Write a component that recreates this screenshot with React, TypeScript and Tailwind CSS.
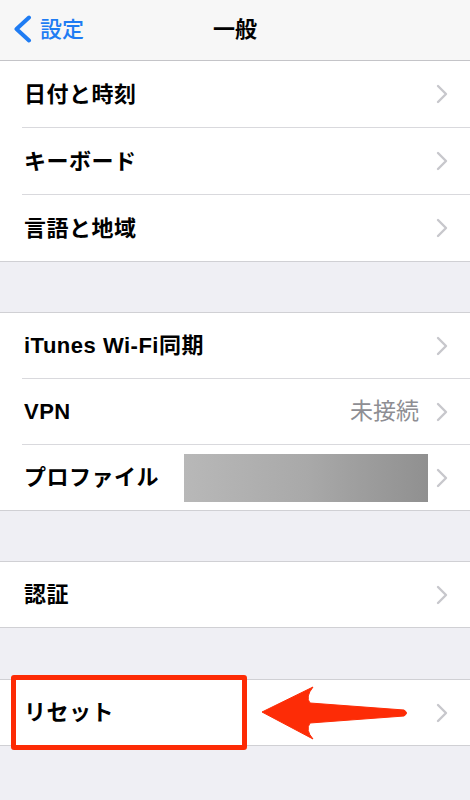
import React from 'react';

const font = { fontFamily: '"Liberation Sans", "Noto Sans CJK JP", sans-serif' };

const Chevron: React.FC = () => (
  <svg width="14" height="20" viewBox="0 0 14 20" className="shrink-0">
    <path d="M3 2 L11 10 L3 18" fill="none" stroke="#c7c7cc" strokeWidth="2.4" strokeLinecap="round" strokeLinejoin="round" />
  </svg>
);

interface RowProps {
  label: string;
  value?: string;
  redacted?: boolean;
  tall?: boolean;
}

const Row: React.FC<RowProps> = ({ label, value, redacted, tall }) => (
  <div className={`flex items-center pl-6 pr-[21px] ${tall ? 'h-[66px]' : 'h-[65px]'}`}>
    <span className="text-[22px] font-semibold text-black tracking-[0.5px]">{label}</span>
    <div className="ml-auto flex items-center">
      {value && <span className="text-[23px] text-[#8e8e93] mr-[16px]">{value}</span>}
      {redacted && (
        <div className="w-[244px] h-[48px] mr-[7px] bg-gradient-to-r from-[#b8b8b8] via-[#a9a9a9] to-[#909090]" />
      )}
      <Chevron />
    </div>
  </div>
);

const Separator: React.FC = () => <div className="ml-[22px] h-px bg-[#d9d9dd]" />;

const Section: React.FC<{ rows: RowProps[]; top?: boolean }> = ({ rows, top = true }) => (
  <div className={`bg-white border-b border-[#d0d0d4] ${top ? 'border-t' : ''}`}>
    {rows.map((r, i) => (
      <React.Fragment key={r.label}>
        {i > 0 && <Separator />}
        <Row {...r} />
      </React.Fragment>
    ))}
  </div>
);

export default function App() {
  return (
    <div className="relative w-[470px] h-[800px] overflow-hidden bg-[#efeff4]" style={font}>
      {/* nav bar */}
      <div className="relative h-[61px] bg-[#f7f7f7] border-b border-[#c4c4c8] flex items-center pb-[2px]">
        <div className="flex items-center pl-[12px] text-[#1f7cf3]">
          <svg width="22" height="28" viewBox="0 0 22 28">
            <path d="M17 2.5 L4.5 14 L17 25.5" fill="none" stroke="#1f7cf3" strokeWidth="4" strokeLinecap="round" strokeLinejoin="round" />
          </svg>
          <span className="ml-[6px] text-[22px] font-medium">設定</span>
        </div>
        <span className="absolute left-1/2 top-[13px] -translate-x-1/2 text-[22px] font-bold text-black">一般</span>
      </div>

      <Section
        top={false}
        rows={[
          { label: '日付と時刻', tall: true },
          { label: 'キーボード', tall: true },
          { label: '言語と地域', tall: true },
        ]}
      />
      <div className="h-[50px]" />
      <Section
        rows={[
          { label: 'iTunes Wi-Fi同期' },
          { label: 'VPN', value: '未接続' },
          { label: 'プロファイル', redacted: true },
        ]}
      />
      <div className="h-[50px]" />
      <Section rows={[{ label: '認証' }]} />
      <div className="h-[51px]" />
      <Section rows={[{ label: 'リセット' }]} />

      {/* annotation overlays */}
      <div className="absolute left-[11px] top-[675px] w-[236px] h-[75px] border-[5px] border-[#fd2b05] rounded-[3px]" />
      <svg className="absolute left-0 top-0" width="470" height="800" viewBox="0 0 470 800">
        <path
          d="M262 712 L313 687 Q305 697 310 703 L404 710 Q409 713 404 716 L310 723 Q305 730 313 739 Z"
          fill="#fd2c06"
          stroke="#fd2c06"
          strokeWidth="1"
          strokeLinejoin="round"
        />
      </svg>
    </div>
  );
}
